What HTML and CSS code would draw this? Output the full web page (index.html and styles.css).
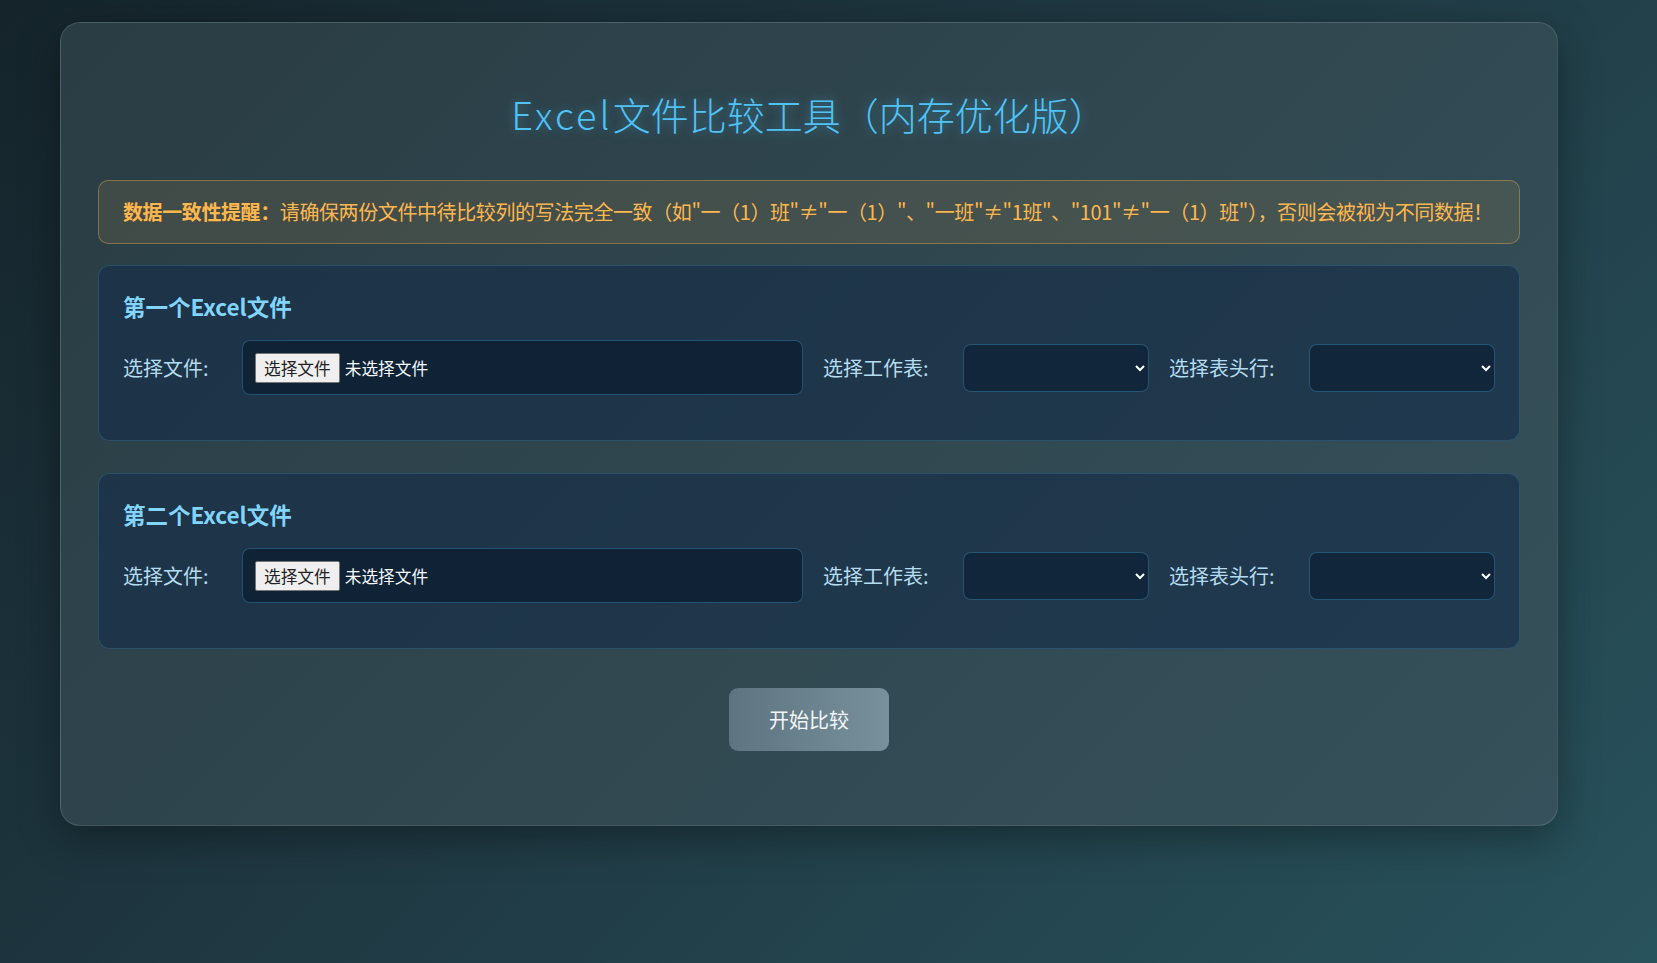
FILE: index.html
```html
<!DOCTYPE html>
<html lang="zh-CN">
<head>
<meta charset="utf-8">
<title>Excel文件比较工具（内存优化版）</title>
<link rel="stylesheet" href="styles.css">
</head>
<body>
<div class="card">
  <h1 class="title"><span class="title-latin">Excel</span>文件比较工具（内存优化版）</h1>

  <div class="notice"><strong>数据一致性提醒：</strong>请确保两份文件中待比较列的写法完全一致（如"一（1）班"≠"一（1）"、"一班"≠"1班"、"101"≠"一（1）班"），否则会被视为不同数据！</div>

  <section class="panel">
    <h3 class="panel-title">第一个Excel文件</h3>
    <div class="row">
      <label class="lbl lbl-file">选择文件:</label>
      <div class="file-box"><span class="file-btn">选择文件</span><span class="file-name">未选择文件</span></div>
      <label class="lbl">选择工作表:</label>
      <select class="sel"></select>
      <label class="lbl">选择表头行:</label>
      <select class="sel"></select>
    </div>
  </section>

  <section class="panel">
    <h3 class="panel-title">第二个Excel文件</h3>
    <div class="row">
      <label class="lbl lbl-file">选择文件:</label>
      <div class="file-box"><span class="file-btn">选择文件</span><span class="file-name">未选择文件</span></div>
      <label class="lbl">选择工作表:</label>
      <select class="sel"></select>
      <label class="lbl">选择表头行:</label>
      <select class="sel"></select>
    </div>
  </section>

  <div class="actions">
    <button class="start-btn" type="button">开始比较</button>
  </div>
</div>
</body>
</html>
```

FILE: styles.css
```css
html, body {
  margin: 0;
  padding: 0;
}

body {
  min-height: 963px;
  background: linear-gradient(135deg, #15242b 0%, #1f3842 45%, #28525c 100%);
  font-family: "Noto Sans CJK SC", "Noto Sans", sans-serif;
  color: #e6f2f8;
  overflow: hidden;
}

.card {
  box-sizing: border-box;
  width: 1498px;
  margin: 22px 0 0 60px;
  padding: 0 37px 74px;
  border: 1px solid rgba(255, 255, 255, 0.12);
  border-radius: 20px;
  background: linear-gradient(135deg, #2a3c44 0%, #30474f 50%, #36515b 100%);
  box-shadow: 0 12px 40px rgba(0, 0, 0, 0.35);
}

.title {
  margin: 68px 0 43px;
  font-size: 38px;
  line-height: 46px;
  font-weight: 300;
  text-align: center;
  color: #4fc3f7;
  text-shadow: 0 0 12px rgba(79, 195, 247, 0.45);
}

.title-latin {
  letter-spacing: 3px;
}

.notice {
  box-sizing: border-box;
  height: 64px;
  padding: 16px 24px;
  margin-bottom: 21px;
  border: 1px solid rgba(255, 183, 77, 0.35);
  border-radius: 10px;
  background: rgba(255, 183, 77, 0.1);
  color: #ffb74d;
  font-size: 20px;
  line-height: 30px;
  letter-spacing: -0.4px;
  white-space: nowrap;
}

.notice strong {
  font-weight: 700;
}

.panel {
  box-sizing: border-box;
  height: 176px;
  padding: 25px 24px 0;
  margin-bottom: 32px;
  border: 1px solid rgba(79, 195, 247, 0.2);
  border-radius: 12px;
  background: rgba(20, 43, 71, 0.6);
}

.panel + .panel {
  margin-bottom: 0;
}

.panel-title {
  margin: 0 0 19px;
  font-size: 22.5px;
  line-height: 30px;
  font-weight: 700;
  color: #81d4fa;
}

.row {
  display: flex;
  align-items: center;
  gap: 20px;
}

.lbl {
  flex: none;
  width: 120px;
  font-size: 20px;
  line-height: 30px;
  color: #b3dcef;
  white-space: nowrap;
}

.lbl-file {
  width: 99px;
}

.file-box {
  box-sizing: border-box;
  flex: 1;
  height: 55px;
  display: flex;
  align-items: center;
  padding: 0 12px;
  border: 1px solid rgba(79, 195, 247, 0.3);
  border-radius: 8px;
  background: #0f2236;
}

.file-btn {
  box-sizing: border-box;
  height: 30px;
  padding: 0 8px;
  display: inline-flex;
  align-items: center;
  border: 1px solid #767676;
  border-radius: 2px;
  background: #efefef;
  color: #222;
  font-size: 16.7px;
}

.file-name {
  margin-left: 5px;
  font-size: 16.7px;
  color: #f4f8fa;
}

.sel {
  flex: none;
  box-sizing: border-box;
  width: 186px;
  height: 48px;
  padding: 0 10px;
  border: 1px solid rgba(79, 195, 247, 0.3);
  border-radius: 8px;
  background-color: #11263b;
  color: #ffffff;
  font-size: 17px;
  font-family: inherit;
}

.actions {
  display: flex;
  justify-content: center;
  margin-top: 39px;
}

.start-btn {
  width: 160px;
  height: 63px;
  border: none;
  border-radius: 9px;
  background: linear-gradient(90deg, #5e7581 0%, #77909b 100%);
  color: #f2f6f8;
  font-family: inherit;
  font-size: 20px;
  cursor: pointer;
}
```
